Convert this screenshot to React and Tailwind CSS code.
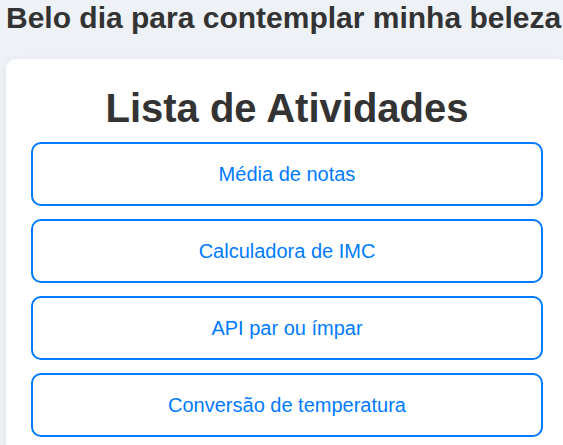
export default function App() {
  const items = ["Média de notas", "Calculadora de IMC", "API par ou ímpar", "Conversão de temperatura"];
  return (
    <div className="min-h-[445px] w-[563px] overflow-hidden bg-[#eef2f7]" style={{ fontFamily: '"Liberation Sans", Arial, sans-serif' }}>
      <h1 className="pl-[6px] pt-[1px] text-[30px] font-bold leading-[34px] text-[#333] whitespace-nowrap">Belo dia para contemplar minha beleza</h1>
      <div className="ml-[6px] mt-[24px] w-[562px] rounded-[10px] bg-white px-[25px] pt-[26px] pb-[20px] shadow-[0_2px_8px_rgba(0,0,0,0.08)]">
        <h2 className="text-center text-[40px] font-bold leading-[46px] text-[#333]">Lista de Atividades</h2>
        <div className="mt-[11px] flex flex-col gap-[13px]">
          {items.map((t) => (
            <button key={t} className="flex h-[64px] w-full items-center justify-center rounded-[10px] border-2 border-[#007bff] bg-white text-[20px] text-[#007bff]">
              {t}
            </button>
          ))}
        </div>
      </div>
    </div>
  );
}
